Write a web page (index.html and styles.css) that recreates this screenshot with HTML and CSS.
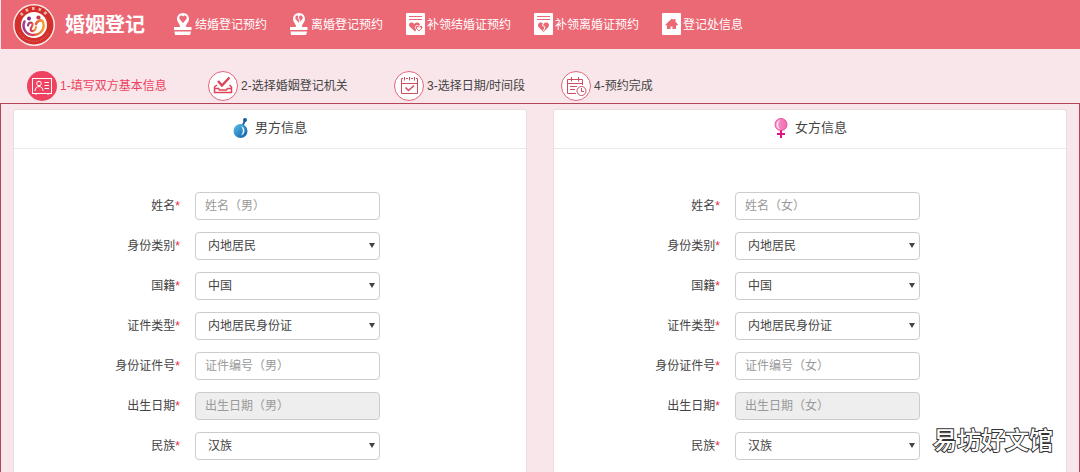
FILE: index.html
```html
<!DOCTYPE html>
<html lang="zh-CN">
	<head>
		<meta charset="utf-8">
		<meta name="viewport" content="width=device-width, initial-scale=1">
		<title>婚姻登记</title>
		<link rel="stylesheet" href="styles.css">
	</head>
	<body>
		<header class="cabecera">
			<svg class="logo" viewBox="0 0 42 42">
				<defs>
					<linearGradient id="lazo" x1="0" y1="0" x2="1" y2="0">
						<stop offset="0" stop-color="#9a3a90"/>
						<stop offset="0.5" stop-color="#e0484a"/>
						<stop offset="1" stop-color="#f3a22c"/>
					</linearGradient>
				</defs>
				<circle cx="21" cy="21" r="21" fill="#fbeaea"/>
				<circle cx="21" cy="21" r="19.500" fill="#d3302b"/>
				<circle cx="21" cy="21" r="13" fill="#fff"/>
				<g fill="none" stroke="#f3b7b0">
					<path stroke-width="3" stroke-dasharray="2.500 4" d="M8 11A16.300 16.300 0 0 1 34.500 11.500"/>
					<path stroke-width="1" stroke-dasharray="1 1" d="M6.500 28.500A16.300 16.300 0 0 0 35.500 28.500" opacity=".5"/>
				</g>
				<circle cx="16" cy="14.500" r="2" fill="#7b2a86"/>
				<circle cx="25.500" cy="13.500" r="2.100" fill="#c03a4c"/>
				<g fill="none" stroke="url(#lazo)" stroke-linecap="round">
					<path stroke-width="2.500" d="M11.500 17.500C8.500 24 13 31 20 31C28 31 33 24 29.500 17C27.500 15.500 24 17 23 20"/>
					<path stroke-width="2.200" d="M15 21.500C15.500 17.500 20 18 19.500 21C19 23.500 16.500 24.500 18 26.500C20 28 23.500 26 23 23"/>
				</g>
			</svg>
			<h1>婚姻登记</h1>
			<nav>
				<a href="#">
					<svg class="icono" viewBox="0 0 20 23">
						<path fill="#fff" d="M10 0C13.700 0 16 2.800 16 6C16 9 13 10.800 13 14H18.500V17H1V14H7C7 10.800 4 9 4 6C4 2.800 6.300 0 10 0ZM1.500 18.500H18V19L17 22H2L1.500 19Z"/>
						<path fill="#eb6875" d="M10 10L6.500 6C5.500 2.500 8.500 1.500 10 3.500C11.500 1.500 14.500 2.500 13.500 6Z"/>
					</svg>
					结婚登记预约
				</a>
				<a href="#">
					<svg class="icono" viewBox="0 0 20 23">
						<path fill="#fff" d="M10 0C13.700 0 16 2.800 16 6C16 9 13 10.800 13 14H18.500V17H1V14H7C7 10.800 4 9 4 6C4 2.800 6.300 0 10 0ZM1.500 18.500H18V19L17 22H2L1.500 19Z"/>
						<path fill="#eb6875" d="M10 10L6.500 6C5.500 2.500 8.500 1.500 10 3.500C11.500 1.500 14.500 2.500 13.500 6Z"/>
						<path fill="none" stroke="#fff" d="M10 3L9 5.500L11 6.500L10 10"/>
					</svg>
					离婚登记预约
				</a>
				<a href="#">
					<svg class="icono" viewBox="0 0 20 23">
						<rect x="1" width="19" height="22" rx="1" fill="#fff"/>
						<path stroke="#eb6875" d="M4 3.500H17M4 6.500H17"/>
						<path fill="#eb6875" d="M10 18.500L4.500 13.500C2.500 9.500 7.500 8 9.500 11C11.500 8.500 15 9.500 15 12Z"/>
						<path fill="#eb6875" stroke="#fff" d="M14 19L10.500 15.500C9.500 12.500 12.500 11.500 14 13.500C15.500 11.500 19 12.500 17.500 15.500Z"/>
						<path fill="#fff" d="M14 17.500L12 15.500C11.500 13.500 13.500 13.500 14 14.700C14.500 13.500 16.500 13.500 16 15.500Z"/>
					</svg>
					补领结婚证预约
				</a>
				<a href="#">
					<svg class="icono" viewBox="0 0 20 23">
						<rect x="1" width="19" height="22" rx="1" fill="#fff"/>
						<path stroke="#eb6875" d="M4 3.500H17M4 6.500H17"/>
						<path fill="#eb6875" d="M10.500 19L5.500 14C3.500 9.500 8.500 8 10.500 11C12.500 8 17.500 9.500 15.500 14Z"/>
						<path fill="none" stroke="#fff" d="M10.500 10L9.500 12.500L12 14L10.500 18"/>
					</svg>
					补领离婚证预约
				</a>
				<a href="#">
					<svg class="icono" viewBox="0 0 20 23">
						<rect x="1" width="19" height="22" rx="1" fill="#fff"/>
						<path fill="#eb6875" d="M4 12L11 5.500L12.500 7V6H14.500V8.700L17 11.500L16 12.500H15V16H11.500V13.500H9.500V16H6V12.500Z"/>
					</svg>
					登记处信息
				</a>
			</nav>
		</header>

		<ol class="pasos">
			<li class="activo">
				<svg class="circulo" viewBox="0 0 30 30">
					<circle cx="15" cy="15" r="15" fill="#ee4260"/>
					<g fill="none" stroke="#fff">
						<rect x="5.500" y="7.500" width="19" height="15"/>
						<circle cx="12" cy="12.500" r="2.300"/>
						<path d="M8 20C8 17 10 15.500 12 15.500C14 15.500 16 17 16 20M17.500 11.500H22M17.500 14.500H22M17.500 17.500H22M9 22V24M21 22V24"/>
					</g>
				</svg>
				1-填写双方基本信息
			</li>
			<li>
				<svg class="circulo" viewBox="0 0 30 30">
					<circle cx="15" cy="15" r="14.500" fill="#fff" stroke="#e2667a"/>
					<g fill="none" stroke="#de4359">
						<path stroke-width="1.500" d="M9 14L6.500 16V21.500H23.500V16L21.500 14M6.500 17.500H10.500L11.500 19H18.500L19.500 17.500H23.500"/>
						<path stroke-width="2.500" d="M10 10L14 14.500L21.500 6.500"/>
					</g>
				</svg>
				2-选择婚姻登记机关
			</li>
			<li>
				<svg class="circulo" viewBox="0 0 30 30">
					<circle cx="15" cy="15" r="14.500" fill="#fff" stroke="#e2667a"/>
					<g fill="none" stroke="#d04c60">
						<path d="M9 7.500H7.500V22.500H23.500V7.500H22M12 7.500H14M17 7.500H19M7.500 12.500H23.500M10.500 6V9.500M15.500 6V9.500M20.500 6V9.500"/>
						<path stroke-width="1.500" d="M11.500 16.500L14.500 19.500L20 14.500"/>
					</g>
				</svg>
				3-选择日期/时间段
			</li>
			<li>
				<svg class="circulo" viewBox="0 0 30 30">
					<circle cx="15" cy="15" r="14.500" fill="#fff" stroke="#e2667a"/>
					<g fill="none" stroke="#d04c60">
						<path d="M15 22.500H6.500V8.500H21.500V14M6.500 12.500H21.500M10.500 6V10.500M17.500 6V10.500M9 15.500H16M9 18.500H14"/>
						<circle cx="20.500" cy="20" r="4.500"/>
						<path d="M20.500 17V20.500H23"/>
					</g>
				</svg>
				4-预约完成
			</li>
		</ol>

		<form class="datos" action="#">
			<!-- datos del hombre -->
			<section class="panel">
				<h2>
					<svg class="genero" viewBox="0 0 16 20">
						<defs>
							<linearGradient id="azul" x1="0" y1="0" x2="1" y2="1">
								<stop offset="0" stop-color="#5cc0ea"/>
								<stop offset="1" stop-color="#0a5aa4"/>
							</linearGradient>
						</defs>
						<path stroke="#1b5a9e" stroke-width="2" d="M10 7L12 2"/>
						<circle cx="12" cy="2" r="2" fill="#1b5a9e"/>
						<circle cx="7.500" cy="13" r="7" fill="url(#azul)"/>
						<path fill="#e6f5fc" d="M8 8A5 5 0 0 1 8 17.500A7 7 0 0 0 8 8Z"/>
					</svg>
					男方信息
				</h2>
				<div class="campos">
					<label for="nombreH">姓名<i>*</i></label>
					<input type="text" id="nombreH" placeholder="姓名（男）">
					<label for="claseH">身份类别<i>*</i></label>
					<span class="lista"><select id="claseH"><option>内地居民</option></select></span>
					<label for="paisH">国籍<i>*</i></label>
					<span class="lista"><select id="paisH"><option>中国</option></select></span>
					<label for="tipoH">证件类型<i>*</i></label>
					<span class="lista"><select id="tipoH"><option>内地居民身份证</option></select></span>
					<label for="numeroH">身份证件号<i>*</i></label>
					<input type="text" id="numeroH" placeholder="证件编号（男）">
					<label for="fechaH">出生日期<i>*</i></label>
					<input type="text" id="fechaH" placeholder="出生日期（男）" readonly>
					<label for="etniaH">民族<i>*</i></label>
					<span class="lista"><select id="etniaH"><option>汉族</option></select></span>
				</div>
			</section>

			<!-- datos de la mujer -->
			<section class="panel">
				<h2>
					<svg class="genero" viewBox="0 0 16 20">
						<defs>
							<linearGradient id="rosa" x1="0" y1="0" x2="1" y2="0">
								<stop offset="0" stop-color="#f59aca"/>
								<stop offset="1" stop-color="#f06ab0"/>
							</linearGradient>
						</defs>
						<circle cx="8" cy="6.500" r="6" fill="url(#rosa)" stroke="#ea4ba0"/>
						<path fill="#fde3f1" d="M7 2A5 5 0 0 0 7 11.500A7 7 0 0 1 7 2Z"/>
						<path stroke="#e3128a" stroke-width="2" d="M8 12.500V20M4 16H12"/>
					</svg>
					女方信息
				</h2>
				<div class="campos">
					<label for="nombreM">姓名<i>*</i></label>
					<input type="text" id="nombreM" placeholder="姓名（女）">
					<label for="claseM">身份类别<i>*</i></label>
					<span class="lista"><select id="claseM"><option>内地居民</option></select></span>
					<label for="paisM">国籍<i>*</i></label>
					<span class="lista"><select id="paisM"><option>中国</option></select></span>
					<label for="tipoM">证件类型<i>*</i></label>
					<span class="lista"><select id="tipoM"><option>内地居民身份证</option></select></span>
					<label for="numeroM">身份证件号<i>*</i></label>
					<input type="text" id="numeroM" placeholder="证件编号（女）">
					<label for="fechaM">出生日期<i>*</i></label>
					<input type="text" id="fechaM" placeholder="出生日期（女）" readonly>
					<label for="etniaM">民族<i>*</i></label>
					<span class="lista"><select id="etniaM"><option>汉族</option></select></span>
				</div>
			</section>
		</form>

		<div class="marca">易坊好文馆</div>
	</body>
</html>
```
FILE: styles.css
```css
* {
	margin: 0;
	padding: 0;
	box-sizing: border-box;
}

body {
	display: flex;
	flex-direction: column;
	min-height: 100vh;
	background-color: #f8e6ea;
	color: #444;
	font-family: "Liberation Sans", "Noto Sans CJK SC", sans-serif;
	font-size: 12px;
	line-height: 18px;
}

/* barra superior */
.cabecera {
	display: flex;
	align-items: center;
	height: 49px;
	margin-left: 1px;
	padding-left: 12px;
	background-color: #eb6875;
	color: #fff;
}

.logo {
	width: 42px;
	height: 42px;
}

h1 {
	margin-left: 10px;
	font-size: 20px;
	font-weight: bold;
	line-height: 28px;
}

nav {
	display: flex;
	gap: 22px;
	margin-left: 28px;
}

nav a {
	display: flex;
	align-items: center;
	gap: 2px;
	color: #fff;
	text-decoration: none;
	white-space: nowrap;
}

.icono {
	width: 20px;
	height: 23px;
}

/* pasos de la reserva */
.pasos {
	display: grid;
	grid-template-columns: 181px 186px 167px auto;
	padding: 22px 0 2px 27px;
	list-style: none;
}

.pasos li {
	display: flex;
	align-items: center;
	gap: 3px;
	white-space: nowrap;
}

.pasos .activo {
	color: #ee4260;
}

.circulo {
	width: 30px;
	height: 30px;
}

/* formulario */
.datos {
	flex: 1;
	display: grid;
	grid-template-columns: 1fr 1fr;
	gap: 26px;
	padding: 5px 12px 0;
	border: 1px solid #b54556;
	border-bottom: 0;
}

.panel {
	background-color: #fff;
	border: 1px solid #e8dde0;
	border-bottom: 0;
	border-radius: 3px 3px 0 0;
}

h2 {
	display: flex;
	justify-content: center;
	align-items: center;
	gap: 6px;
	height: 39px;
	padding-bottom: 2px;
	border-bottom: 1px solid #e9e9e9;
	font-size: 13px;
	font-weight: normal;
}

.genero {
	width: 16px;
	height: 20px;
}

.campos {
	display: grid;
	grid-template-columns: 181fr 185fr 146fr;
	grid-auto-rows: 28px;
	row-gap: 12px;
	padding-top: 43px;
}

label {
	grid-column: 1;
	align-self: center;
	padding-right: 15px;
	text-align: right;
}

label i {
	color: #e8283c;
	font-style: normal;
}

input, select {
	width: 100%;
	height: 28px;
	padding: 0 9px;
	background-color: #fff;
	border: 1px solid #ccc;
	border-radius: 4px;
	color: #444;
	font: inherit;
}

input::placeholder {
	color: #999;
}

input[readonly] {
	background-color: #eee;
}

select {
	appearance: none;
	padding: 0 12px;
}

.lista {
	position: relative;
}

/* flecha de la lista */
.lista::after {
	content: "";
	position: absolute;
	top: 11px;
	right: 5px;
	border: 3px solid transparent;
	border-top: 5px solid #444;
	border-bottom: 0;
	pointer-events: none;
}

.marca {
	position: absolute;
	right: 27px;
	bottom: 14px;
	color: #fff;
	font-size: 24px;
	font-weight: 500;
	line-height: 34px;
	-webkit-text-stroke: 2px #333;
	paint-order: stroke fill;
}
```
